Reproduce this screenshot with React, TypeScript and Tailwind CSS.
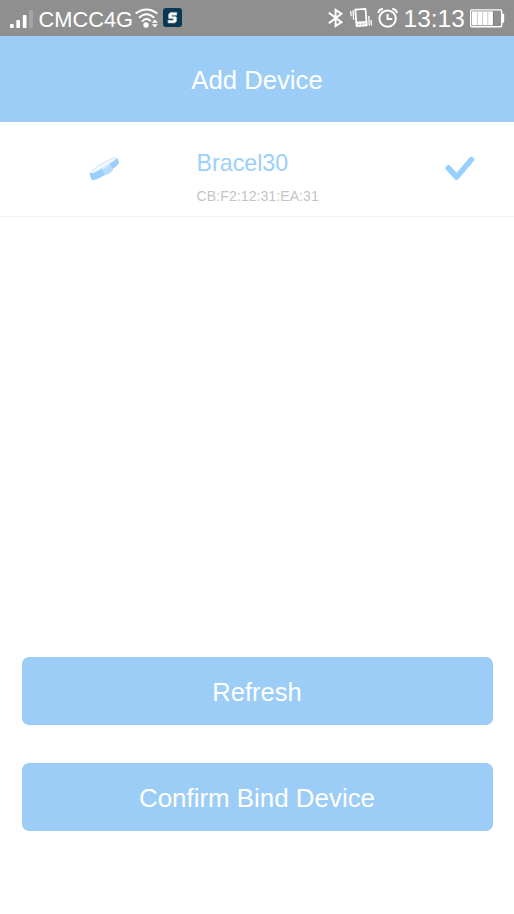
import { useState } from 'react';

const devices = [{ name: 'Bracel30', mac: 'CB:F2:12:31:EA:31' }];

function SignalIcon() {
  return (
    <svg className="w-[24px] h-[36px]" viewBox="10 0 24 36" fill="#fff">
      <rect x="10" y="24" width="3.7" height="4" rx="0.8" />
      <rect x="16.3" y="20" width="3.7" height="8" rx="0.8" />
      <rect x="22.8" y="15" width="3.7" height="13" rx="0.8" />
      <rect x="29.2" y="10" width="3.7" height="18" rx="0.8" fill="#a6a6a6" />
    </svg>
  );
}

function WifiIcon() {
  return (
    <svg className="w-[24px] h-[36px]" viewBox="135 0 24 36" fill="none" stroke="#fff" strokeWidth="1.9">
      <path d="M135.6 13.6Q146.5 5.3 157.4 13.6" />
      <path d="M139 17.8Q146.5 10.8 154.2 17.8" />
      <path d="M142 21.6Q146.3 16.6 150.8 21.2" />
      <circle cx="146" cy="25" r="2.7" fill="#fff" stroke="none" />
      <path d="M154.8 19.6L157.8 22.8H151.8ZM154.8 27.6L157.8 24.2H151.8Z" fill="#fff" stroke="none" />
    </svg>
  );
}

function AppBadge() {
  return (
    <svg className="w-[20px] h-[36px]" viewBox="163 0 20 36">
      <rect x="163" y="8" width="19" height="19" rx="3" fill="#0a3853" />
      <path
        d="M176.8 12.4H170.4L168.6 14.2V18.4H173.2V20.2H168V22.9H174.6L176.6 21.2V17.2L175.2 16.4H171.8V15.2H176.8Z"
        fill="#fff"
        stroke="#a9bcc8"
        strokeWidth="0.7"
      />
    </svg>
  );
}

function BluetoothIcon() {
  return (
    <svg className="w-[16px] h-[36px]" viewBox="328 0 16 36" fill="none" stroke="#fff" strokeWidth="2">
      <path d="M328.8 12.8L341.4 22.3L335.6 26.2V9.9L341.4 13.7L328.8 23.2" />
    </svg>
  );
}

function VibrateIcon() {
  return (
    <svg className="w-[23px] h-[36px]" viewBox="350 0 23 36" fill="none" stroke="#fff">
      <path d="M355.3 9.7L365.5 8.9L366.8 25.3L356.6 26.1Z" strokeWidth="1.8" strokeLinejoin="round" />
      <path d="M356.2 21.8L366.6 21L366.9 25.7L356.6 26.4Z" fill="#fff" stroke="none" />
      <path d="M358.2 24.3H359.6M361.2 24.1H363M364.4 23.9H365.6" stroke="#919191" strokeWidth="1" />
      <path d="M350.7 11L351.1 16.2M353 10.2L353.6 19.8M368.8 16L369.3 25.6M371.1 20L371.5 25.4" strokeWidth="1.3" />
    </svg>
  );
}

function AlarmIcon() {
  return (
    <svg className="w-[22px] h-[36px]" viewBox="377 0 22 36" fill="none" stroke="#fff" strokeWidth="2">
      <circle cx="387.6" cy="18.6" r="8.2" />
      <path d="M387.6 14V18.9H392.2" />
      <path d="M378.3 13Q378.6 9.6 382.9 8.8M396.9 13Q396.6 9.6 392.3 8.8" />
    </svg>
  );
}

function BatteryIcon() {
  return (
    <svg className="w-[35px] h-[36px]" viewBox="470 0 35 36">
      <rect x="470.5" y="9.9" width="31.2" height="16.8" rx="1.5" fill="none" stroke="#fff" strokeWidth="1.4" />
      <path d="M502 13.8H503.3Q504.2 13.8 504.2 14.8V21.7Q504.2 22.7 503.3 22.7H502Z" fill="#fff" />
      <rect x="471.9" y="11.4" width="21.1" height="13.8" fill="#fff" />
      <path d="M477.4 11.4V25.2M482.6 11.4V25.2M487.8 11.4V25.2" stroke="#c6c6c6" strokeWidth="0.9" />
      <path d="M493.4 11V25.6" stroke="#7d7d7d" strokeWidth="0.8" />
    </svg>
  );
}

function BraceletIcon() {
  return (
    <svg className="w-[32px] h-[28px]" viewBox="88 155 32 28" strokeLinejoin="round">
      {/* inside of the band */}
      <path d="M90.3 173.2C92 169.6 100 164.6 106.5 161.2C111 158.8 115.5 157 117 158.2C116.4 160.6 111 163.8 107.5 165.6L97.5 171.4C94 173.4 91 174.8 90.3 173.2Z" fill="#f1f8ff" stroke="#bfdffd" strokeWidth="0.9" />
      {/* lower left strap */}
      <path d="M89.8 172.8Q92.4 174.4 97.3 171.3L102.2 168.2L106 174.4L100.4 177.4Q94.5 180.8 91.6 179.8Q90.4 178.4 89.8 172.8Z" fill="#99cffd" />
      {/* upper right strap */}
      <path d="M109.4 163.8Q115 160.6 117.2 157.9Q119 160.8 118.9 163.6Q116.8 166.4 111.8 169.8Z" fill="#99cffd" />
      <path d="M101.6 168.7L109.8 163.4L113 170.2L108.6 174L105 175Z" fill="#b7dcfd" />
      <path d="M102.4 169L109.4 164.6" stroke="#deeffe" strokeWidth="1.1" />
    </svg>
  );
}

function CheckIcon() {
  return (
    <svg className="w-[32px] h-[28px]" viewBox="444 155 32 28" fill="none" stroke="#97cffd" strokeWidth="5.6" strokeLinecap="round" strokeLinejoin="round">
      <path d="M448.3 168L456.6 177L471.3 159.7" />
    </svg>
  );
}

function StatusBar() {
  return (
    <div className="h-[36px] shrink-0 bg-[#8f8f8f] text-white flex items-center justify-between pl-[10px] pr-[9px]">
      <div className="flex items-center">
        <SignalIcon />
        <span className="ml-[4.5px] w-[96.5px] text-[21.8px] leading-[34px] pt-[3px] whitespace-nowrap">CMCC4G</span>
        <WifiIcon />
        <div className="ml-[4px]">
          <AppBadge />
        </div>
      </div>
      <div className="flex items-center">
        <BluetoothIcon />
        <div className="ml-[6px]">
          <VibrateIcon />
        </div>
        <div className="ml-[4px]">
          <AlarmIcon />
        </div>
        <span className="ml-[4.5px] w-[66.5px] text-[24.5px] leading-[36px] pt-px whitespace-nowrap">13:13</span>
        <BatteryIcon />
      </div>
    </div>
  );
}

export default function App() {
  const [selected, setSelected] = useState(devices[0].mac);

  return (
    <div className="w-full h-screen overflow-hidden bg-white flex flex-col font-['Liberation_Sans',Arial,sans-serif]">
      <StatusBar />
      <header className="h-[85.5px] shrink-0 bg-[#9ccdf7] flex items-center justify-center">
        <h1 className="text-[25.7px] leading-[30px] pt-[2px] text-white">Add Device</h1>
      </header>

      <ul className="flex-1">
        {devices.map((device) => (
          <li
            key={device.mac}
            className="h-[95.5px] border-b border-[#f3f3f3] flex items-start pl-[88px] pr-[38px]"
            onClick={() => setSelected(device.mac)}
          >
            <div className="mt-[33.5px]">
              <BraceletIcon />
            </div>
            <div className="ml-[76.6px] pt-[27.5px] flex-1">
              <div className="text-[23.2px] leading-[28px] text-[#9bd0fb]">{device.name}</div>
              <div className="mt-[10px] text-[14.2px] leading-[18px] text-[#c4c4c4]">{device.mac}</div>
            </div>
            <div className="mt-[33.5px]">{selected === device.mac && <CheckIcon />}</div>
          </li>
        ))}
      </ul>

      <div className="px-[21.5px] pb-[83px] flex flex-col gap-[37.5px]">
        <button className="h-[68.5px] rounded-[7px] bg-[#9ccdf7] text-[25.5px] text-white pt-[2px]">Refresh</button>
        <button className="h-[68.5px] rounded-[7px] bg-[#9ccdf7] text-[25.9px] text-white pt-[4px]">Confirm Bind Device</button>
      </div>
    </div>
  );
}
